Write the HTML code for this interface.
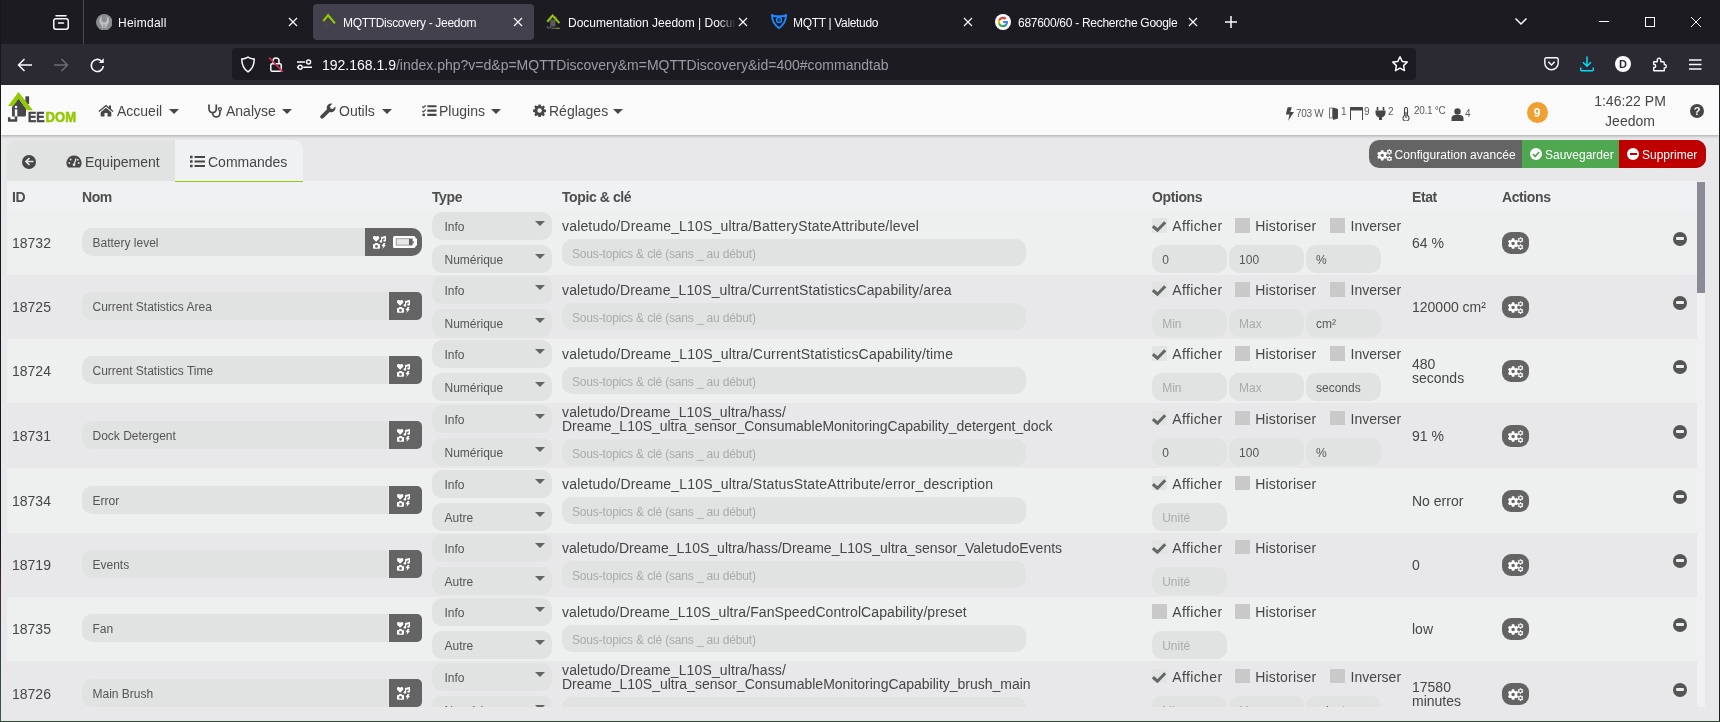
<!DOCTYPE html><html lang="fr"><head><meta charset="utf-8"><title>MQTTDiscovery - Jeedom</title><style>
*{box-sizing:border-box;margin:0;padding:0}
html,body{width:1720px;height:722px;overflow:hidden;background:#e8e8ea;font-family:"Liberation Sans",sans-serif;color:#464646}
body{position:relative}
#wrap{position:absolute;left:0;top:0;width:1720px;height:722px;will-change:transform}
.abs{position:absolute}
/* ---------- Browser chrome ---------- */
#tabbar{position:absolute;left:0;top:0;width:1720px;height:44px;background:#1c1b22}
#navbar{position:absolute;left:0;top:44px;width:1720px;height:41px;background:#2b2a33}
#tabbar .t{position:absolute;top:0;height:44px;color:#fbfbfe;font-size:12px;line-height:46.500px;white-space:nowrap}
#acttab{position:absolute;left:313px;top:4px;width:221px;height:36px;border-radius:4px;background:#42414d}
#urlbar{position:absolute;left:232px;top:48px;width:1184px;height:32px;border-radius:4px;background:#1c1b22}
#url{position:absolute;left:322px;top:44px;height:41px;line-height:42px;font-size:14px;color:#fbfbfe;white-space:nowrap}
#url span{color:#9d9ca6}
.cx{position:absolute;width:10px;height:10px}
/* ---------- Jeedom header ---------- */
#hdr{position:absolute;left:1px;top:85px;width:1718px;height:50px;background:#fafafa;box-shadow:0 1px 3px rgba(0,0,0,.28)}
.mi{position:absolute;top:0;height:50px;line-height:52px;font-size:14px;color:#464646;white-space:nowrap}
.caret{position:absolute;width:0;height:0;border-left:5px solid transparent;border-right:5px solid transparent;border-top:5px solid #464646}
.sm{position:absolute;font-size:10px;color:#5a5a5a;white-space:nowrap;letter-spacing:-.3px}
/* ---------- Page ---------- */
#tabs{position:absolute;left:7px;top:140px;width:296px;height:41.300px;border-radius:9px 9px 0 0;background:#e1e2e2;overflow:hidden}
#tabs .on{position:absolute;left:168px;top:0;width:128px;height:41.300px;background:#f0f1f2}
.tl{position:absolute;top:139px;height:42px;line-height:46px;font-size:14px;color:#464646;white-space:nowrap}
#btns{position:absolute;left:1369px;top:140px;width:337px;height:28px;border-radius:10px;overflow:hidden;background:#646464}
#btns div{position:absolute;top:0;height:28px;line-height:30.500px;color:#fff;font-size:12px;white-space:nowrap}
#thead{position:absolute;left:7px;top:181px;width:1690px;height:30.500px;background:#f0f1f2}
#thead b{position:absolute;top:0;line-height:32px;font-size:14px;font-weight:bold;color:#4e4e4e;letter-spacing:-.4px}
#tbl{position:absolute;left:7px;top:181px;width:1690px;height:526px;overflow:hidden}
#tbl>div{position:absolute;white-space:nowrap}
.rbg{left:0;width:1690px}
.id,.tp,.cl,.et{line-height:16px;font-size:14px;color:#464646}
.tp{letter-spacing:.16px}
.cl{letter-spacing:.2px}
.nm{left:75px;width:306px;height:27.500px;border-radius:10px 0 0 10px;background:#e1e2e2;font-size:12px;line-height:16px;color:#555}
.nm.short{width:282.500px}
.nm span{position:absolute;left:10.500px;top:6.600px}
.nb{left:382px;width:33px;height:27.600px;border-radius:0 5px 5px 0;background:#646464}
.nb.wide{left:358px;width:57px;border-radius:0 10px 10px 0}
.nb svg.imagic{position:absolute;left:7.900px;top:8.100px}
.nb.wide svg.imagic{left:8px}
.nb svg.batt{position:absolute;left:28.150px;top:8px}
.sel{left:425px;width:120px;height:28px;border-radius:10px;background:#e1e2e2;font-size:12px;line-height:16px;color:#555}
.sel span{position:absolute;left:12.500px;top:6.600px}
.sel i{position:absolute;left:103px;top:9px;width:0;height:0;border-left:5px solid transparent;border-right:5px solid transparent;border-top:5px solid #646464}
.sub{left:555px;width:464px;height:27.600px;border-radius:10px;background:#e1e2e2;font-size:12px;line-height:16px;color:#aaa;letter-spacing:-.16px}
.sub span{position:absolute;left:10px;top:7.700px}
.cb{width:14.600px;height:14.400px;background:#c9c9ca}
.cb.on{background:#e2e3e3}
.cb svg{position:absolute;left:0;top:0}
.op{width:74.600px;height:27.500px;border-radius:10px;background:#e1e2e2;font-size:12px;line-height:16px;color:#555}
.op.ph{color:#aaa}
.op span{position:absolute;left:10px;top:6.600px}
.ab{left:1495px;width:27px;height:22px;border-radius:9px;background:#646464}
.ab svg{position:absolute;left:0;top:0}
.rm{left:1666px;width:14px;height:14px;border-radius:7px;background:#555}
.rm b{position:absolute;left:3px;top:5.300px;width:8px;height:2.700px;background:#eee;border-radius:1px}
/* scrollbar + window borders */
#sbt{position:absolute;left:1697px;top:181px;width:8px;height:526px;background:#f0f0f2}
#sbh{position:absolute;left:1697px;top:182px;width:8px;height:111px;background:#8b8a97}
#bl{position:absolute;left:0;top:0;width:1.200px;height:722px;background:linear-gradient(180deg,#16171c 0,#16171c 540px,#4a2530 585px,#2b3e44 640px,#3a5a44 722px)}
#br{position:absolute;left:1718.600px;top:85px;width:1.400px;height:637px;background:#1d1d1f}
#bb{position:absolute;left:0;top:720.700px;width:1720px;height:1.300px;background:#334a38}

</style></head><body><div id="wrap">
<div id="tabbar">
  <!-- firefox view -->
  <svg class="abs" style="left:52px;top:13px" width="18" height="18" viewBox="0 0 18 18"><rect x="1.750" y="5.750" width="14.500" height="10.500" rx="2.200" fill="none" stroke="#fbfbfe" stroke-width="1.500"/><path d="M4 2.750h10" stroke="#fbfbfe" stroke-width="1.500" stroke-linecap="round"/><path d="M6.500 10h5" stroke="#fbfbfe" stroke-width="1.500" stroke-linecap="round"/></svg>
  <div class="abs" style="left:83px;top:0;width:1px;height:44px;background:#4a4952"></div>
  <!-- tab 1 -->
  <svg class="abs" style="left:95.800px;top:13.800px" width="16.500" height="16.500" viewBox="0 0 16.500 16.500"><circle cx="8.250" cy="8.250" r="8.250" fill="#8a8d8d"/><path d="M4.500 10C2.500 7 3.500 3.500 6 2.300 5 4.500 5.300 7 7 8.200h2.500c1.700-1.200 2-3.700 1-5.900C13 3.500 14 7 12 10c-1 1.500-1.500 2.500-1.700 4H6.200C6 12.500 5.500 11.500 4.500 10z" fill="#bec1c1"/><path d="M7.600 10.500v3.500M8.900 10.500v3.500" stroke="#8a8d8d" stroke-width=".7"/></svg>
  <div class="t" style="left:118px;letter-spacing:.24px">Heimdall</div>
  <svg class="cx" style="left:288px;top:17px" viewBox="0 0 10 10"><path d="M1 1l8 8M9 1l-8 8" stroke="#fbfbfe" stroke-width="1.200"/></svg>
  <!-- tab 2 active -->
  <div id="acttab"></div>
  <svg class="abs" style="left:321px;top:13.400px" width="16" height="16" viewBox="0 0 16 16"><path d="M2.300 8L7.100 2.200l6.900 8.200" fill="none" stroke="#93ca02" stroke-width="2.100" stroke-linejoin="miter"/><path d="M4.300 9.500h4v3h-4zM2.300 14.500h3" fill="none" stroke="#4b4a55" stroke-width=".9"/></svg>
  <div class="t" style="left:343px;letter-spacing:-.31px">MQTTDiscovery - Jeedom</div>
  <svg class="cx" style="left:513px;top:17px" viewBox="0 0 10 10"><path d="M1 1l8 8M9 1l-8 8" stroke="#fbfbfe" stroke-width="1.200"/></svg>
  <!-- tab 3 -->
  <svg class="abs" style="left:545px;top:13px" width="17" height="17" viewBox="0 0 17 17"><path d="M5.300 6.500h5.200v7H5.300z" fill="#5a5a60"/><path d="M10.300 3.500h1.300v3h-1.300z" fill="#5a5a60"/><path d="M2.300 8.800L7.600 2.500l6.800 7.600" fill="none" stroke="#93ca02" stroke-width="2.100"/><path d="M2.300 13v2h3v-2" fill="none" stroke="#66666c" stroke-width="1"/><path d="M6.500 15.300h4" stroke="#66666c" stroke-width="1.200"/><path d="M10.800 15.300h4" stroke="#7da516" stroke-width="1.200"/></svg>
  <div class="t" style="left:568px;width:170px;letter-spacing:0;overflow:hidden;-webkit-mask-image:linear-gradient(90deg,#000 150px,transparent 168px);mask-image:linear-gradient(90deg,#000 150px,transparent 168px)">Documentation Jeedom | Documentation</div>
  <svg class="cx" style="left:738px;top:17px" viewBox="0 0 10 10"><path d="M1 1l8 8M9 1l-8 8" stroke="#fbfbfe" stroke-width="1.200"/></svg>
  <!-- tab 4 -->
  <svg class="abs" style="left:771px;top:14px" width="16" height="15" viewBox="0 0 16 15"><path d="M1 .8C2.700 3 5 2.200 8 2.200S13.300 3 15 .8C15.300 7 13 10.500 8 14.200 3 10.500.7 7 1 .8z" fill="none" stroke="#1e88ff" stroke-width="1.900" stroke-linejoin="round"/><circle cx="8" cy="6" r="2.500" fill="none" stroke="#1e88ff" stroke-width="1.400"/><circle cx="8" cy="6" r=".8" fill="#1e88ff"/></svg>
  <div class="t" style="left:793px;letter-spacing:-.33px">MQTT | Valetudo</div>
  <svg class="cx" style="left:963px;top:17px" viewBox="0 0 10 10"><path d="M1 1l8 8M9 1l-8 8" stroke="#fbfbfe" stroke-width="1.200"/></svg>
  <!-- tab 5 -->
  <svg class="abs" style="left:995px;top:14px" width="16" height="16" viewBox="0 0 16 16"><circle cx="8" cy="8" r="8" fill="#fff"/><path d="M13 8.100c0-.4 0-.7-.1-1H8v2h2.800c-.1.600-.5 1.200-1 1.500v1.300h1.600c1-.9 1.600-2.200 1.600-3.800z" fill="#4285f4"/><path d="M8 13.200c1.400 0 2.600-.5 3.400-1.300l-1.600-1.300c-.5.300-1.100.5-1.800.5-1.400 0-2.500-.9-2.900-2.200H3.400v1.300c.8 1.800 2.600 3 4.600 3z" fill="#34a853"/><path d="M5.100 8.900c-.1-.3-.2-.6-.2-.9s.1-.6.200-.9V5.800H3.400C3.100 6.500 2.900 7.200 2.900 8s.2 1.500.5 2.200l1.700-1.300z" fill="#fbbc05"/><path d="M8 4.900c.8 0 1.500.3 2 .8l1.500-1.500C10.600 3.300 9.400 2.800 8 2.800c-2 0-3.800 1.200-4.600 3l1.700 1.300C5.500 5.800 6.600 4.900 8 4.900z" fill="#ea4335"/></svg>
  <div class="t" style="left:1018px;letter-spacing:-.29px">687600/60 - Recherche Google</div>
  <svg class="cx" style="left:1188px;top:17px" viewBox="0 0 10 10"><path d="M1 1l8 8M9 1l-8 8" stroke="#fbfbfe" stroke-width="1.200"/></svg>
  <!-- new tab -->
  <svg class="abs" style="left:1224px;top:15px" width="14" height="14" viewBox="0 0 14 14"><path d="M7 1v12M1 7h12" stroke="#fbfbfe" stroke-width="1.500"/></svg>
  <!-- list all tabs -->
  <svg class="abs" style="left:1514px;top:17px" width="14" height="9" viewBox="0 0 14 9"><path d="M1.500 1.500L7 7l5.500-5.500" fill="none" stroke="#fbfbfe" stroke-width="1.500"/></svg>
  <!-- window controls -->
  <div class="abs" style="left:1599px;top:21px;width:10px;height:1px;background:#fbfbfe"></div>
  <div class="abs" style="left:1645px;top:17px;width:10px;height:10px;border:1px solid #fbfbfe"></div>
  <svg class="abs" style="left:1691px;top:17px" width="10" height="10" viewBox="0 0 10 10"><path d="M0 0l10 10M10 0L0 10" stroke="#fbfbfe" stroke-width="1"/></svg>
</div>
<div id="navbar"></div>
<!-- nav buttons -->
<svg class="abs" style="left:17px;top:57px" width="16" height="16" viewBox="0 0 16 16"><path d="M15 8H2M7.500 2L1.500 8l6 6" fill="none" stroke="#fbfbfe" stroke-width="1.500"/></svg>
<svg class="abs" style="left:53px;top:57px" width="16" height="16" viewBox="0 0 16 16"><path d="M1 8h13M8.500 2l6 6-6 6" fill="none" stroke="#6d6c76" stroke-width="1.500"/></svg>
<svg class="abs" style="left:89px;top:56.500px" width="17" height="17" viewBox="0 0 16 16"><path d="M13.500 8.500A5.700 5.700 0 1 1 11.500 3.600" fill="none" stroke="#fbfbfe" stroke-width="1.500"/><path d="M9.300 5.700h4.500V1.200z" fill="#fbfbfe"/></svg>
<div id="urlbar"></div>
<!-- shield -->
<svg class="abs" style="left:240px;top:56px" width="16" height="17" viewBox="0 0 16 17"><path d="M8 1.200c2 1.300 4 1.800 6.200 1.800 0 6-1.600 10-6.200 12.800C3.400 13 1.800 9 1.800 3 4 3 6 2.500 8 1.200z" fill="none" stroke="#fbfbfe" stroke-width="1.500"/></svg>
<!-- lock with slash -->
<svg class="abs" style="left:267px;top:55px" width="18" height="19" viewBox="0 0 18 19"><rect x="3.750" y="8.750" width="10.500" height="7.500" rx="1.500" fill="none" stroke="#fbfbfe" stroke-width="1.500"/><path d="M6 8.500V6a3 3 0 0 1 6 0v2.500" fill="none" stroke="#fbfbfe" stroke-width="1.500"/><path d="M2 2.500l14 14.500" stroke="#e22850" stroke-width="1.600"/></svg>
<!-- permissions -->
<svg class="abs" style="left:296px;top:58px" width="17" height="14" viewBox="0 0 17 14"><path d="M1 4h8.200M1 9.300h1.200M7.200 9.300H16" stroke="#fbfbfe" stroke-width="1.400"/><circle cx="12.600" cy="4" r="2" fill="none" stroke="#fbfbfe" stroke-width="1.400"/><circle cx="4.200" cy="9.300" r="2" fill="none" stroke="#fbfbfe" stroke-width="1.400"/></svg>
<div id="url">192.168.1.9<span>/index.php?v=d&amp;p=MQTTDiscovery&amp;m=MQTTDiscovery&amp;id=400#commandtab</span></div>
<!-- star -->
<svg class="abs" style="left:1391px;top:55px" width="18" height="18" viewBox="0 0 18 18"><path d="M9 1.800l2.200 4.600 5 .7-3.600 3.500.9 5L9 13.200l-4.500 2.400.9-5L1.800 7.100l5-.7z" fill="none" stroke="#fbfbfe" stroke-width="1.500" stroke-linejoin="round"/></svg>
<!-- pocket -->
<svg class="abs" style="left:1543.500px;top:57px" width="15" height="14" viewBox="0 0 15 14"><path d="M2.300 .75h10.400a1.500 1.500 0 0 1 1.500 1.500V6a6.700 6.700 0 0 1-13.400 0V2.250A1.500 1.500 0 0 1 2.300 .75z" fill="none" stroke="#fbfbfe" stroke-width="1.400"/><path d="M4.300 4.800L7.500 8l3.200-3.200" fill="none" stroke="#fbfbfe" stroke-width="1.400"/></svg>
<!-- download -->
<svg class="abs" style="left:1579.500px;top:56px" width="14" height="16" viewBox="0 0 14 16"><path d="M7 .5v9.500M3 6.200l4 4 4-4" fill="none" stroke="#00ddff" stroke-width="1.500"/><path d="M.75 11.500v2a1.250 1.250 0 0 0 1.250 1.250h10a1.250 1.250 0 0 0 1.250-1.250v-2" fill="none" stroke="#00ddff" stroke-width="1.500"/></svg>
<!-- account -->
<div class="abs" style="left:1615px;top:56px;width:16px;height:16px;border-radius:8px;background:#fbfbfe;color:#2b2a33;font-size:11px;font-weight:bold;line-height:16.500px;text-align:center">D</div>
<!-- extensions -->
<svg class="abs" style="left:1651.500px;top:55.200px" width="15" height="18" viewBox="0 0 15 17"><path d="M1.750 6.250h3.500V4.500a1.750 1.750 0 1 1 3.500 0v1.750h2.500a1 1 0 0 1 1 1V9h.250a1.750 1.750 0 1 1 0 3.500h-.250v2.750H1.750V12h.5a1.500 1.500 0 1 0 0-3h-.5z" fill="none" stroke="#fbfbfe" stroke-width="1.400" stroke-linejoin="round"/></svg>
<!-- menu -->
<svg class="abs" style="left:1689px;top:58.500px" width="12.500" height="11" viewBox="0 0 12.500 11"><path d="M0 1h12.500M0 5.500h12.500M0 10h12.500" stroke="#fbfbfe" stroke-width="1.400"/></svg>

<div id="hdr">
  <!-- logo -->
  <svg class="abs" style="left:1px;top:1px" width="90" height="45" viewBox="0 0 90 45">
    <path d="M10 21L16.500 12.500l7.500 10V29a1.500 1.500 0 0 1-1.500 1.500H10z" fill="#46464b"/>
    <rect x="23.400" y="10.300" width="3.700" height="7.800" fill="#46464b"/>
    <path d="M6 20L16.500 5.900l14.400 18.400H25L16.500 12.800 11.200 20z" fill="#93ca02"/>
    <circle cx="14" cy="20.900" r="1.250" fill="#fafafa"/><rect x="12.800" y="23.400" width="2.500" height="7.200" fill="#fafafa"/>
    <path d="M7.200 31.200v3.400h6.800v-4" fill="none" stroke="#46464b" stroke-width="2.500"/>
    <text x="26" y="35.700" font-family="Liberation Sans, sans-serif" font-weight="bold" font-size="13.800" fill="#46464b" stroke="#46464b" stroke-width=".55" textLength="16.600" lengthAdjust="spacingAndGlyphs">EE</text>
    <text x="43.600" y="35.700" font-family="Liberation Sans, sans-serif" font-weight="bold" font-size="13.800" fill="#93ca02" stroke="#93ca02" stroke-width=".55" textLength="30.400" lengthAdjust="spacingAndGlyphs">DOM</text>
  </svg>
  <!-- Accueil -->
  <svg class="abs" style="left:96.700px;top:19.200px" width="16" height="13" viewBox="0 0 16 13"><path d="M8 .8L.5 7l.9 1L8 2.600l6.600 5.400.9-1L13 4.900V1.500h-2v1.800z" fill="#464646"/><path d="M8 3.800L2.700 8.200V12.500h3.800V9h3v3.500h3.800V8.200z" fill="#464646"/></svg>
  <div class="mi" style="left:116px">Accueil</div><div class="caret" style="left:168px;top:24px"></div>
  <!-- Analyse -->
  <svg class="abs" style="left:207.200px;top:19.300px" width="15" height="14" viewBox="0 0 15 14"><path d="M1 .6V5a3.650 3.650 0 0 0 7.300 0V.6M4.650 8.650v.65a3.650 3.650 0 0 0 7.300 0V6.800" fill="none" stroke="#464646" stroke-width="1.700"/><circle cx="11.950" cy="5.100" r="1.500" fill="none" stroke="#464646" stroke-width="1.300"/></svg>
  <div class="mi" style="left:225px">Analyse</div><div class="caret" style="left:281px;top:24px"></div>
  <!-- Outils -->
  <svg class="abs" style="left:319px;top:18px" width="16" height="16" viewBox="0 0 16 16"><path d="M15.300 3.600l-2.500 2.500-2.200-.7-.7-2.200L12.400.7a4.300 4.300 0 0 0-5.400 5.500L.8 12.400a1.900 1.900 0 0 0 2.700 2.700l6.200-6.200a4.300 4.300 0 0 0 5.600-5.300z" fill="#464646"/></svg>
  <div class="mi" style="left:338px">Outils</div><div class="caret" style="left:381px;top:24px"></div>
  <!-- Plugins -->
  <svg class="abs" style="left:421.300px;top:20.200px" width="14.500" height="11.500" viewBox="0 0 14.500 11.500"><path d="M5.300 1.300h9.200M5.300 5.600h9.200M5.300 9.900h9.200" stroke="#464646" stroke-width="2.100"/><path d="M.3 1.500l1.100 1.100L3.700 .300M.3 5.800l1.100 1.100 2.300-2.300" fill="none" stroke="#464646" stroke-width="1.200"/><rect x=".5" y="8.700" width="2.400" height="2.400" fill="#464646"/></svg>
  <div class="mi" style="left:438px">Plugins</div><div class="caret" style="left:490px;top:24px"></div>
  <!-- Réglages -->
  <svg class="abs" style="left:532px;top:19.200px" width="13.200" height="13.200" viewBox="0 0 16 16"><path d="M6.700.5h2.600l.4 2 1.300.6 1.700-1.200 1.800 1.800-1.200 1.700.6 1.300 2 .4v2.600l-2 .4-.6 1.300 1.200 1.700-1.800 1.800-1.700-1.200-1.300.6-.4 2H6.700l-.4-2-1.300-.6-1.700 1.200-1.800-1.800 1.200-1.700-.6-1.300-2-.4V6.700l2-.4.6-1.300-1.200-1.700 1.800-1.800 1.700 1.200 1.300-.6zM8 5.300a2.700 2.700 0 1 0 0 5.400 2.700 2.700 0 0 0 0-5.400z" fill="#464646"/></svg>
  <div class="mi" style="left:548px">Réglages</div><div class="caret" style="left:612px;top:24px"></div>

  <!-- summary -->
  <svg class="abs" style="left:1284px;top:22px" width="9.500" height="14" viewBox="0 0 9 13"><path d="M2.500 0h4L5 4.500h3.500L3 13l1.200-6H.8z" fill="#464646"/></svg>
  <div class="sm" style="left:1295px;top:22.8px">703 W</div>
  <svg class="abs" style="left:1328px;top:22px" width="10" height="13" viewBox="0 0 10 13"><path d="M.5 1h3v10h-3z" fill="none" stroke="#777" stroke-width="1"/><path d="M4 .5l5 1.500v9.500L4 13z" fill="#464646"/></svg>
  <div class="sm" style="left:1340px;top:20.8px">1</div>
  <svg class="abs" style="left:1349px;top:22px" width="13" height="13" viewBox="0 0 13 13"><path d="M.5 13V.5h12V13" fill="none" stroke="#464646" stroke-width="1"/><rect x=".5" y=".5" width="12" height="3" fill="#464646"/></svg>
  <div class="sm" style="left:1363px;top:20.8px">9</div>
  <svg class="abs" style="left:1374px;top:22px" width="11" height="13" viewBox="0 0 11 13"><path d="M2.500 0v3.500M8.500 0v3.500" stroke="#464646" stroke-width="1.600"/><path d="M.5 3.500h10v2.500a5 5 0 0 1-3.500 4.500V13h-3v-2.500A5 5 0 0 1 .5 6z" fill="#464646"/></svg>
  <div class="sm" style="left:1387px;top:20.8px">2</div>
  <svg class="abs" style="left:1401px;top:22px" width="8" height="14" viewBox="0 0 8 14"><path d="M2.500 2a1.500 1.500 0 0 1 3 0v6.500a3 3 0 1 1-3 0z" fill="none" stroke="#464646" stroke-width="1.100"/><path d="M4 5v6" stroke="#464646" stroke-width="1.200"/></svg>
  <div class="sm" style="left:1413px;top:19.8px">20.1 °C</div>
  <svg class="abs" style="left:1450px;top:23px" width="13" height="13" viewBox="0 0 13 13"><circle cx="6.500" cy="3.500" r="3.200" fill="#464646"/><path d="M.5 13v-2.500a3.500 3.500 0 0 1 3.500-3.500h5a3.500 3.500 0 0 1 3.500 3.500V13z" fill="#464646"/></svg>
  <div class="sm" style="left:1464px;top:22.8px">4</div>
  <!-- message badge -->
  <div class="abs" style="left:1525.500px;top:16.600px;width:21px;height:21px;border-radius:11px;background:#f0a030;color:#fff;font-size:12px;font-weight:bold;line-height:22.500px;text-align:center">9</div>
  <!-- clock -->
  <div class="abs" style="left:1564px;top:6px;width:130px;text-align:center;font-size:14px;line-height:20px;color:#464646">1:46:22 PM<br>Jeedom</div>
  <!-- help -->
  <div class="abs" style="left:1689px;top:19px;width:14px;height:14px;border-radius:7px;background:#464646;color:#fafafa;font-size:11px;font-weight:bold;line-height:14.500px;text-align:center">?</div>
</div>

<!-- tab strip -->
<div id="tabs"><div class="on"></div></div>
<div class="abs" style="left:22px;top:154.700px;width:14px;height:14px;border-radius:7px;background:#464646"></div>
<svg class="abs" style="left:24.500px;top:157.200px" width="9" height="9" viewBox="0 0 9 9"><path d="M8.500 4.500H1.500M4.500 1L1 4.500 4.500 8" fill="none" stroke="#e1e2e2" stroke-width="1.700"/></svg>
<svg class="abs" style="left:66px;top:155px" width="16" height="13" viewBox="0 0 16 13"><path d="M8 .5a7.500 7.500 0 0 0-6.300 11.600c.2.300.5.400.8.400h11c.3 0 .6-.1.800-.4A7.500 7.500 0 0 0 8 .5z" fill="#464646"/><path d="M8.200 9.500l1.800-6" stroke="#e1e2e2" stroke-width="1.300"/><circle cx="8" cy="9.800" r="1.400" fill="#e1e2e2"/><circle cx="3.300" cy="8" r=".9" fill="#e1e2e2"/><circle cx="4.700" cy="4.500" r=".9" fill="#e1e2e2"/><circle cx="12.700" cy="8" r=".9" fill="#e1e2e2"/><circle cx="11.800" cy="4.800" r=".9" fill="#e1e2e2"/></svg>
<div class="tl" style="left:85px">Equipement</div>
<svg class="abs" style="left:190px;top:155px" width="15" height="13" viewBox="0 0 15 13"><path d="M4.500 2H15M4.500 6.500H15M4.500 11H15" stroke="#464646" stroke-width="1.800"/><path d="M0 2h2.600M0 6.500h2.600M0 11h2.600" stroke="#464646" stroke-width="2.400"/></svg>
<div class="tl" style="left:208px">Commandes</div>

<!-- action buttons -->
<div id="btns">
  <div style="left:153px;width:97px;background:#4fa850"></div>
  <div style="left:250px;width:87px;background:#bf0000"></div>
  <div style="left:25.500px;letter-spacing:.06px">Configuration avancée</div>
  <div style="left:176px">Sauvegarder</div>
  <div style="left:273px">Supprimer</div>
</div>
<svg class="abs" style="left:1376.700px;top:148.500px" width="15.200" height="12.700" viewBox="5.700 5.100 15.700 12.900"><path fill="#fff" fill-rule="evenodd" d="M12.49 15.41L12.39 16.79L9.81 16.79L9.71 15.41L8.45 14.68L7.20 15.29L5.92 13.06L7.06 12.27L7.06 10.83L5.92 10.04L7.20 7.81L8.45 8.42L9.71 7.69L9.81 6.31L12.39 6.31L12.49 7.69L13.75 8.42L15.00 7.81L16.28 10.04L15.14 10.83L15.14 12.27L16.28 13.06L15.00 15.29L13.75 14.68zM9.35 11.55a1.75 1.75 0 1 0 3.50 0a1.75 1.75 0 1 0 -3.50 0zM19.21 9.98L19.16 10.82L17.84 10.82L17.79 9.98L17.14 9.60L16.39 9.99L15.72 8.84L16.43 8.37L16.43 7.63L15.72 7.16L16.39 6.01L17.14 6.40L17.79 6.02L17.84 5.18L19.16 5.18L19.21 6.02L19.86 6.40L20.61 6.01L21.28 7.16L20.57 7.63L20.57 8.37L21.28 8.84L20.61 9.99L19.86 9.60zM17.50 8.00a1.00 1.00 0 1 0 2.00 0a1.00 1.00 0 1 0 -2.00 0zM19.21 17.08L19.16 17.92L17.84 17.92L17.79 17.08L17.14 16.70L16.39 17.09L15.72 15.94L16.43 15.47L16.43 14.73L15.72 14.26L16.39 13.11L17.14 13.50L17.79 13.12L17.84 12.28L19.16 12.28L19.21 13.12L19.86 13.50L20.61 13.11L21.28 14.26L20.57 14.73L20.57 15.47L21.28 15.94L20.61 17.09L19.86 16.70zM17.50 15.10a1.00 1.00 0 1 0 2.00 0a1.00 1.00 0 1 0 -2.00 0z"/></svg>
<div class="abs" style="left:1530px;top:148px;width:12px;height:12px;border-radius:6px;background:#fff"></div>
<svg class="abs" style="left:1530px;top:148px" width="12" height="12" viewBox="0 0 12 12"><path d="M3 6.200l2.200 2.200L9.200 4" fill="none" stroke="#4fa850" stroke-width="1.700"/></svg>
<div class="abs" style="left:1627px;top:148px;width:12px;height:12px;border-radius:6px;background:#fff"></div>
<div class="abs" style="left:1629.500px;top:152.800px;width:7px;height:2.500px;background:#bf0000"></div>

<!-- table header -->
<div id="thead">
  <b style="left:5px">ID</b><b style="left:75px">Nom</b><b style="left:425px">Type</b><b style="left:555px">Topic &amp; clé</b><b style="left:1145px">Options</b><b style="left:1405px">Etat</b><b style="left:1495px">Actions</b>
</div>
<div class="abs" style="left:175px;top:180.500px;width:128px;height:1.500px;background:#93ca02"></div>

<div id="tbl">
<div class="rbg" style="top:30px;height:64px;background:#eeefef"></div>
<div class="rbg" style="top:94px;height:64px;background:#e8e8ea"></div>
<div class="rbg" style="top:158px;height:64px;background:#eeefef"></div>
<div class="rbg" style="top:222px;height:65px;background:#e8e8ea"></div>
<div class="rbg" style="top:287px;height:64.5px;background:#eeefef"></div>
<div class="rbg" style="top:351.5px;height:64px;background:#e8e8ea"></div>
<div class="rbg" style="top:415.5px;height:64.5px;background:#eeefef"></div>
<div class="rbg" style="top:480px;height:46px;background:#e8e8ea"></div>
<div class="id" style="left:5px;top:54.15px;">18732</div><div class="nm short" style="top:47.25px"><span>Battery level</span></div><div class="nb wide" style="top:47.25px"><svg class="imagic" viewBox="0 0 13 13" width="13" height="13"><g fill="#fff"><path d="M3.100 5.700L.400 2.900C-.4 2.100-.2.700.7.200 1.600-.3 2.600.1 3.100.9 3.600.1 4.600-.3 5.500.2c.9.500 1.100 1.900.400 2.700z"/><path d="M8 1.100L13-.1v4.700a1.350 1.150 0 1 1-1.200-1.150V2.200L9.200 2.800v2.700A1.350 1.150 0 1 1 8 4.350z"/><path d="M.8 7.900h1l.6-.9h2.200l.6.900h1c.45 0 .8.350.8.800v3.200c0 .450-.350.800-.8.800H.8c-.450 0-.8-.350-.8-.8V8.700c0-.450.350-.800.8-.800zm2.700 1.100a1.400 1.400 0 1 0 0 2.800 1.400 1.400 0 0 0 0-2.800z"/><path d="M10.600 6.900h1.900l-1 2.100h1.500l-3.600 4 .9-2.800H8.500z"/></g></svg><svg class="batt" viewBox="0 0 24.200 12.200" width="24.200" height="12.200"><path d="M1.800 0h19.200L22.600 1.200v1.300h.6a1 1 0 0 1 1 1v5.200a1 1 0 0 1-1 1h-.6V11L21 12.200H1.800A1.800 1.800 0 0 1 0 10.400V1.800A1.800 1.800 0 0 1 1.800 0z" fill="#fff"/><rect x="2.850" y="2.500" width="16.800" height="6.900" fill="#646464"/><rect x="3.450" y="3.100" width="12.500" height="5.700" fill="#e8e8e8"/><rect x="19.600" y="5" width="1.200" height="2.200" fill="#646464"/></svg></div><div class="sel" style="top:31px"><span style="top:7.400px">Info</span><i></i></div><div class="sel" style="top:64.2px"><span>Numérique</span><i></i></div><div class="tp" style="left:555px;top:37.15px;letter-spacing:0.17px">valetudo/Dreame_L10S_ultra/BatteryStateAttribute/level</div><div class="sub" style="top:57.8px"><span>Sous-topics &amp; clé (sans _ au début)</span></div><div class="cb on" style="left:1145.2px;top:37.3px"><svg viewBox="0 0 14.600 14.400" width="14.600" height="14.400"><path d="M.9 8.200L5.400 12.200l7.800-7.900" fill="none" stroke="#666" stroke-width="3"/></svg></div><div class="cl" style="left:1165.2px;top:37.15px;letter-spacing:.38px">Afficher</div><div class="cb" style="left:1228.2px;top:37.3px"></div><div class="cl" style="left:1248.2px;top:37.15px;">Historiser</div><div class="cb" style="left:1323.1px;top:37.3px"></div><div class="cl" style="left:1343.5px;top:37.15px;letter-spacing:0">Inverser</div><div class="op" style="left:1145.2px;top:64.2px"><span>0</span></div><div class="op" style="left:1222.1px;top:64.2px"><span>100</span></div><div class="op" style="left:1299px;top:64.2px"><span>%</span></div><div class="et" style="left:1405px;top:54.15px;">64 %</div><div class="ab" style="top:50.9px"><svg viewBox="0 0 27 22" width="27" height="22"><path fill="#fff" fill-rule="evenodd" d="M12.49 15.41L12.39 16.79L9.81 16.79L9.71 15.41L8.45 14.68L7.20 15.29L5.92 13.06L7.06 12.27L7.06 10.83L5.92 10.04L7.20 7.81L8.45 8.42L9.71 7.69L9.81 6.31L12.39 6.31L12.49 7.69L13.75 8.42L15.00 7.81L16.28 10.04L15.14 10.83L15.14 12.27L16.28 13.06L15.00 15.29L13.75 14.68zM9.35 11.55a1.75 1.75 0 1 0 3.50 0a1.75 1.75 0 1 0 -3.50 0zM19.21 9.98L19.16 10.82L17.84 10.82L17.79 9.98L17.14 9.60L16.39 9.99L15.72 8.84L16.43 8.37L16.43 7.63L15.72 7.16L16.39 6.01L17.14 6.40L17.79 6.02L17.84 5.18L19.16 5.18L19.21 6.02L19.86 6.40L20.61 6.01L21.28 7.16L20.57 7.63L20.57 8.37L21.28 8.84L20.61 9.99L19.86 9.60zM17.35 8.00a1.15 1.15 0 1 0 2.30 0a1.15 1.15 0 1 0 -2.30 0zM19.21 17.08L19.16 17.92L17.84 17.92L17.79 17.08L17.14 16.70L16.39 17.09L15.72 15.94L16.43 15.47L16.43 14.73L15.72 14.26L16.39 13.11L17.14 13.50L17.79 13.12L17.84 12.28L19.16 12.28L19.21 13.12L19.86 13.50L20.61 13.11L21.28 14.26L20.57 14.73L20.57 15.47L21.28 15.94L20.61 17.09L19.86 16.70zM17.35 15.10a1.15 1.15 0 1 0 2.30 0a1.15 1.15 0 1 0 -2.30 0z"/></svg></div><div class="rm" style="top:51px"><b></b></div>
<div class="id" style="left:5px;top:118.15px;">18725</div><div class="nm" style="top:111.25px"><span>Current Statistics Area</span></div><div class="nb" style="top:111.25px"><svg class="imagic" viewBox="0 0 13 13" width="13" height="13"><g fill="#fff"><path d="M3.100 5.700L.400 2.900C-.4 2.100-.2.700.7.200 1.600-.3 2.600.1 3.100.9 3.600.1 4.600-.3 5.500.2c.9.500 1.100 1.900.400 2.700z"/><path d="M8 1.100L13-.1v4.700a1.350 1.150 0 1 1-1.200-1.150V2.200L9.200 2.800v2.700A1.350 1.150 0 1 1 8 4.350z"/><path d="M.8 7.900h1l.6-.9h2.200l.6.900h1c.45 0 .8.350.8.800v3.200c0 .450-.350.800-.8.800H.8c-.450 0-.8-.350-.8-.8V8.700c0-.450.350-.800.8-.800zm2.700 1.100a1.400 1.400 0 1 0 0 2.800 1.400 1.400 0 0 0 0-2.800z"/><path d="M10.600 6.900h1.900l-1 2.100h1.500l-3.600 4 .9-2.800H8.500z"/></g></svg></div><div class="sel" style="top:95px"><span style="top:7.400px">Info</span><i></i></div><div class="sel" style="top:128.2px"><span>Numérique</span><i></i></div><div class="tp" style="left:555px;top:101.15px;letter-spacing:0.13px">valetudo/Dreame_L10S_ultra/CurrentStatisticsCapability/area</div><div class="sub" style="top:121.8px"><span>Sous-topics &amp; clé (sans _ au début)</span></div><div class="cb on" style="left:1145.2px;top:101.3px"><svg viewBox="0 0 14.600 14.400" width="14.600" height="14.400"><path d="M.9 8.200L5.400 12.200l7.800-7.900" fill="none" stroke="#666" stroke-width="3"/></svg></div><div class="cl" style="left:1165.2px;top:101.15px;letter-spacing:.38px">Afficher</div><div class="cb" style="left:1228.2px;top:101.3px"></div><div class="cl" style="left:1248.2px;top:101.15px;">Historiser</div><div class="cb" style="left:1323.1px;top:101.3px"></div><div class="cl" style="left:1343.5px;top:101.15px;letter-spacing:0">Inverser</div><div class="op ph" style="left:1145.2px;top:128.2px"><span>Min</span></div><div class="op ph" style="left:1222.1px;top:128.2px"><span>Max</span></div><div class="op" style="left:1299px;top:128.2px"><span>cm²</span></div><div class="et" style="left:1405px;top:118.15px;">120000 cm²</div><div class="ab" style="top:114.9px"><svg viewBox="0 0 27 22" width="27" height="22"><path fill="#fff" fill-rule="evenodd" d="M12.49 15.41L12.39 16.79L9.81 16.79L9.71 15.41L8.45 14.68L7.20 15.29L5.92 13.06L7.06 12.27L7.06 10.83L5.92 10.04L7.20 7.81L8.45 8.42L9.71 7.69L9.81 6.31L12.39 6.31L12.49 7.69L13.75 8.42L15.00 7.81L16.28 10.04L15.14 10.83L15.14 12.27L16.28 13.06L15.00 15.29L13.75 14.68zM9.35 11.55a1.75 1.75 0 1 0 3.50 0a1.75 1.75 0 1 0 -3.50 0zM19.21 9.98L19.16 10.82L17.84 10.82L17.79 9.98L17.14 9.60L16.39 9.99L15.72 8.84L16.43 8.37L16.43 7.63L15.72 7.16L16.39 6.01L17.14 6.40L17.79 6.02L17.84 5.18L19.16 5.18L19.21 6.02L19.86 6.40L20.61 6.01L21.28 7.16L20.57 7.63L20.57 8.37L21.28 8.84L20.61 9.99L19.86 9.60zM17.35 8.00a1.15 1.15 0 1 0 2.30 0a1.15 1.15 0 1 0 -2.30 0zM19.21 17.08L19.16 17.92L17.84 17.92L17.79 17.08L17.14 16.70L16.39 17.09L15.72 15.94L16.43 15.47L16.43 14.73L15.72 14.26L16.39 13.11L17.14 13.50L17.79 13.12L17.84 12.28L19.16 12.28L19.21 13.12L19.86 13.50L20.61 13.11L21.28 14.26L20.57 14.73L20.57 15.47L21.28 15.94L20.61 17.09L19.86 16.70zM17.35 15.10a1.15 1.15 0 1 0 2.30 0a1.15 1.15 0 1 0 -2.30 0z"/></svg></div><div class="rm" style="top:115px"><b></b></div>
<div class="id" style="left:5px;top:182.15px;">18724</div><div class="nm" style="top:175.25px"><span>Current Statistics Time</span></div><div class="nb" style="top:175.25px"><svg class="imagic" viewBox="0 0 13 13" width="13" height="13"><g fill="#fff"><path d="M3.100 5.700L.400 2.900C-.4 2.100-.2.700.7.200 1.600-.3 2.600.1 3.100.9 3.600.1 4.600-.3 5.500.2c.9.500 1.100 1.900.400 2.700z"/><path d="M8 1.100L13-.1v4.700a1.350 1.150 0 1 1-1.200-1.150V2.200L9.200 2.800v2.700A1.350 1.150 0 1 1 8 4.350z"/><path d="M.8 7.900h1l.6-.9h2.200l.6.900h1c.45 0 .8.350.8.800v3.200c0 .450-.350.800-.8.800H.8c-.450 0-.8-.350-.8-.8V8.700c0-.450.350-.800.8-.800zm2.700 1.100a1.400 1.400 0 1 0 0 2.800 1.400 1.400 0 0 0 0-2.800z"/><path d="M10.600 6.900h1.900l-1 2.100h1.500l-3.600 4 .9-2.800H8.500z"/></g></svg></div><div class="sel" style="top:159px"><span style="top:7.400px">Info</span><i></i></div><div class="sel" style="top:192.2px"><span>Numérique</span><i></i></div><div class="tp" style="left:555px;top:165.15px;letter-spacing:0.18px">valetudo/Dreame_L10S_ultra/CurrentStatisticsCapability/time</div><div class="sub" style="top:185.8px"><span>Sous-topics &amp; clé (sans _ au début)</span></div><div class="cb on" style="left:1145.2px;top:165.3px"><svg viewBox="0 0 14.600 14.400" width="14.600" height="14.400"><path d="M.9 8.200L5.400 12.200l7.800-7.900" fill="none" stroke="#666" stroke-width="3"/></svg></div><div class="cl" style="left:1165.2px;top:165.15px;letter-spacing:.38px">Afficher</div><div class="cb" style="left:1228.2px;top:165.3px"></div><div class="cl" style="left:1248.2px;top:165.15px;">Historiser</div><div class="cb" style="left:1323.1px;top:165.3px"></div><div class="cl" style="left:1343.5px;top:165.15px;letter-spacing:0">Inverser</div><div class="op ph" style="left:1145.2px;top:192.2px"><span>Min</span></div><div class="op ph" style="left:1222.1px;top:192.2px"><span>Max</span></div><div class="op" style="left:1299px;top:192.2px"><span>seconds</span></div><div class="et" style="left:1405px;top:175.15px;">480</div><div class="et" style="left:1405px;top:189.15px;">seconds</div><div class="ab" style="top:178.9px"><svg viewBox="0 0 27 22" width="27" height="22"><path fill="#fff" fill-rule="evenodd" d="M12.49 15.41L12.39 16.79L9.81 16.79L9.71 15.41L8.45 14.68L7.20 15.29L5.92 13.06L7.06 12.27L7.06 10.83L5.92 10.04L7.20 7.81L8.45 8.42L9.71 7.69L9.81 6.31L12.39 6.31L12.49 7.69L13.75 8.42L15.00 7.81L16.28 10.04L15.14 10.83L15.14 12.27L16.28 13.06L15.00 15.29L13.75 14.68zM9.35 11.55a1.75 1.75 0 1 0 3.50 0a1.75 1.75 0 1 0 -3.50 0zM19.21 9.98L19.16 10.82L17.84 10.82L17.79 9.98L17.14 9.60L16.39 9.99L15.72 8.84L16.43 8.37L16.43 7.63L15.72 7.16L16.39 6.01L17.14 6.40L17.79 6.02L17.84 5.18L19.16 5.18L19.21 6.02L19.86 6.40L20.61 6.01L21.28 7.16L20.57 7.63L20.57 8.37L21.28 8.84L20.61 9.99L19.86 9.60zM17.35 8.00a1.15 1.15 0 1 0 2.30 0a1.15 1.15 0 1 0 -2.30 0zM19.21 17.08L19.16 17.92L17.84 17.92L17.79 17.08L17.14 16.70L16.39 17.09L15.72 15.94L16.43 15.47L16.43 14.73L15.72 14.26L16.39 13.11L17.14 13.50L17.79 13.12L17.84 12.28L19.16 12.28L19.21 13.12L19.86 13.50L20.61 13.11L21.28 14.26L20.57 14.73L20.57 15.47L21.28 15.94L20.61 17.09L19.86 16.70zM17.35 15.10a1.15 1.15 0 1 0 2.30 0a1.15 1.15 0 1 0 -2.30 0z"/></svg></div><div class="rm" style="top:179px"><b></b></div>
<div class="id" style="left:5px;top:246.95px;">18731</div><div class="nm" style="top:240.05px"><span>Dock Detergent</span></div><div class="nb" style="top:240.05px"><svg class="imagic" viewBox="0 0 13 13" width="13" height="13"><g fill="#fff"><path d="M3.100 5.700L.400 2.900C-.4 2.100-.2.700.7.200 1.600-.3 2.600.1 3.100.9 3.600.1 4.600-.3 5.500.2c.9.500 1.100 1.900.400 2.700z"/><path d="M8 1.100L13-.1v4.700a1.350 1.150 0 1 1-1.200-1.150V2.200L9.200 2.800v2.700A1.350 1.150 0 1 1 8 4.350z"/><path d="M.8 7.900h1l.6-.9h2.200l.6.900h1c.45 0 .8.350.8.800v3.200c0 .450-.350.800-.8.800H.8c-.450 0-.8-.350-.8-.8V8.700c0-.450.350-.800.8-.800zm2.700 1.100a1.400 1.400 0 1 0 0 2.800 1.400 1.400 0 0 0 0-2.800z"/><path d="M10.600 6.900h1.900l-1 2.100h1.500l-3.600 4 .9-2.800H8.500z"/></g></svg></div><div class="sel" style="top:223.8px"><span style="top:7.400px">Info</span><i></i></div><div class="sel" style="top:257px"><span>Numérique</span><i></i></div><div class="tp" style="left:555px;top:222.55px;letter-spacing:0.14px">valetudo/Dreame_L10S_ultra/hass/</div><div class="tp" style="left:555px;top:236.55px;letter-spacing:-0.03px">Dreame_L10S_ultra_sensor_ConsumableMonitoringCapability_detergent_dock</div><div class="sub" style="top:257.7px"><span>Sous-topics &amp; clé (sans _ au début)</span></div><div class="cb on" style="left:1145.2px;top:230.1px"><svg viewBox="0 0 14.600 14.400" width="14.600" height="14.400"><path d="M.9 8.200L5.400 12.200l7.800-7.900" fill="none" stroke="#666" stroke-width="3"/></svg></div><div class="cl" style="left:1165.2px;top:229.95px;letter-spacing:.38px">Afficher</div><div class="cb" style="left:1228.2px;top:230.1px"></div><div class="cl" style="left:1248.2px;top:229.95px;">Historiser</div><div class="cb" style="left:1323.1px;top:230.1px"></div><div class="cl" style="left:1343.5px;top:229.95px;letter-spacing:0">Inverser</div><div class="op" style="left:1145.2px;top:257px"><span>0</span></div><div class="op" style="left:1222.1px;top:257px"><span>100</span></div><div class="op" style="left:1299px;top:257px"><span>%</span></div><div class="et" style="left:1405px;top:246.95px;">91 %</div><div class="ab" style="top:243.7px"><svg viewBox="0 0 27 22" width="27" height="22"><path fill="#fff" fill-rule="evenodd" d="M12.49 15.41L12.39 16.79L9.81 16.79L9.71 15.41L8.45 14.68L7.20 15.29L5.92 13.06L7.06 12.27L7.06 10.83L5.92 10.04L7.20 7.81L8.45 8.42L9.71 7.69L9.81 6.31L12.39 6.31L12.49 7.69L13.75 8.42L15.00 7.81L16.28 10.04L15.14 10.83L15.14 12.27L16.28 13.06L15.00 15.29L13.75 14.68zM9.35 11.55a1.75 1.75 0 1 0 3.50 0a1.75 1.75 0 1 0 -3.50 0zM19.21 9.98L19.16 10.82L17.84 10.82L17.79 9.98L17.14 9.60L16.39 9.99L15.72 8.84L16.43 8.37L16.43 7.63L15.72 7.16L16.39 6.01L17.14 6.40L17.79 6.02L17.84 5.18L19.16 5.18L19.21 6.02L19.86 6.40L20.61 6.01L21.28 7.16L20.57 7.63L20.57 8.37L21.28 8.84L20.61 9.99L19.86 9.60zM17.35 8.00a1.15 1.15 0 1 0 2.30 0a1.15 1.15 0 1 0 -2.30 0zM19.21 17.08L19.16 17.92L17.84 17.92L17.79 17.08L17.14 16.70L16.39 17.09L15.72 15.94L16.43 15.47L16.43 14.73L15.72 14.26L16.39 13.11L17.14 13.50L17.79 13.12L17.84 12.28L19.16 12.28L19.21 13.12L19.86 13.50L20.61 13.11L21.28 14.26L20.57 14.73L20.57 15.47L21.28 15.94L20.61 17.09L19.86 16.70zM17.35 15.10a1.15 1.15 0 1 0 2.30 0a1.15 1.15 0 1 0 -2.30 0z"/></svg></div><div class="rm" style="top:243.8px"><b></b></div>
<div class="id" style="left:5px;top:311.95px;">18734</div><div class="nm" style="top:305.05px"><span>Error</span></div><div class="nb" style="top:305.05px"><svg class="imagic" viewBox="0 0 13 13" width="13" height="13"><g fill="#fff"><path d="M3.100 5.700L.400 2.900C-.4 2.100-.2.700.7.200 1.600-.3 2.600.1 3.100.9 3.600.1 4.600-.3 5.500.2c.9.500 1.100 1.900.400 2.700z"/><path d="M8 1.100L13-.1v4.700a1.350 1.150 0 1 1-1.200-1.150V2.200L9.200 2.800v2.700A1.350 1.150 0 1 1 8 4.350z"/><path d="M.8 7.900h1l.6-.9h2.200l.6.900h1c.45 0 .8.350.8.800v3.200c0 .450-.350.800-.8.800H.8c-.450 0-.8-.350-.8-.8V8.700c0-.450.350-.800.8-.800zm2.700 1.100a1.400 1.400 0 1 0 0 2.800 1.400 1.400 0 0 0 0-2.800z"/><path d="M10.600 6.900h1.900l-1 2.100h1.500l-3.600 4 .9-2.800H8.500z"/></g></svg></div><div class="sel" style="top:288.8px"><span style="top:7.400px">Info</span><i></i></div><div class="sel" style="top:322px"><span>Autre</span><i></i></div><div class="tp" style="left:555px;top:294.95px;letter-spacing:0.18px">valetudo/Dreame_L10S_ultra/StatusStateAttribute/error_description</div><div class="sub" style="top:315.6px"><span>Sous-topics &amp; clé (sans _ au début)</span></div><div class="cb on" style="left:1145.2px;top:295.1px"><svg viewBox="0 0 14.600 14.400" width="14.600" height="14.400"><path d="M.9 8.200L5.400 12.200l7.800-7.900" fill="none" stroke="#666" stroke-width="3"/></svg></div><div class="cl" style="left:1165.2px;top:294.95px;letter-spacing:.38px">Afficher</div><div class="cb" style="left:1228.2px;top:295.1px"></div><div class="cl" style="left:1248.2px;top:294.95px;">Historiser</div><div class="op ph" style="left:1145.2px;top:322px"><span>Unité</span></div><div class="et" style="left:1405px;top:311.95px;">No error</div><div class="ab" style="top:308.7px"><svg viewBox="0 0 27 22" width="27" height="22"><path fill="#fff" fill-rule="evenodd" d="M12.49 15.41L12.39 16.79L9.81 16.79L9.71 15.41L8.45 14.68L7.20 15.29L5.92 13.06L7.06 12.27L7.06 10.83L5.92 10.04L7.20 7.81L8.45 8.42L9.71 7.69L9.81 6.31L12.39 6.31L12.49 7.69L13.75 8.42L15.00 7.81L16.28 10.04L15.14 10.83L15.14 12.27L16.28 13.06L15.00 15.29L13.75 14.68zM9.35 11.55a1.75 1.75 0 1 0 3.50 0a1.75 1.75 0 1 0 -3.50 0zM19.21 9.98L19.16 10.82L17.84 10.82L17.79 9.98L17.14 9.60L16.39 9.99L15.72 8.84L16.43 8.37L16.43 7.63L15.72 7.16L16.39 6.01L17.14 6.40L17.79 6.02L17.84 5.18L19.16 5.18L19.21 6.02L19.86 6.40L20.61 6.01L21.28 7.16L20.57 7.63L20.57 8.37L21.28 8.84L20.61 9.99L19.86 9.60zM17.35 8.00a1.15 1.15 0 1 0 2.30 0a1.15 1.15 0 1 0 -2.30 0zM19.21 17.08L19.16 17.92L17.84 17.92L17.79 17.08L17.14 16.70L16.39 17.09L15.72 15.94L16.43 15.47L16.43 14.73L15.72 14.26L16.39 13.11L17.14 13.50L17.79 13.12L17.84 12.28L19.16 12.28L19.21 13.12L19.86 13.50L20.61 13.11L21.28 14.26L20.57 14.73L20.57 15.47L21.28 15.94L20.61 17.09L19.86 16.70zM17.35 15.10a1.15 1.15 0 1 0 2.30 0a1.15 1.15 0 1 0 -2.30 0z"/></svg></div><div class="rm" style="top:308.8px"><b></b></div>
<div class="id" style="left:5px;top:375.95px;">18719</div><div class="nm" style="top:369.05px"><span>Events</span></div><div class="nb" style="top:369.05px"><svg class="imagic" viewBox="0 0 13 13" width="13" height="13"><g fill="#fff"><path d="M3.100 5.700L.400 2.900C-.4 2.100-.2.700.7.200 1.600-.3 2.600.1 3.100.9 3.600.1 4.600-.3 5.500.2c.9.500 1.100 1.900.400 2.700z"/><path d="M8 1.100L13-.1v4.700a1.350 1.150 0 1 1-1.200-1.150V2.200L9.200 2.800v2.700A1.350 1.150 0 1 1 8 4.350z"/><path d="M.8 7.900h1l.6-.9h2.200l.6.900h1c.45 0 .8.350.8.800v3.200c0 .450-.350.800-.8.800H.8c-.450 0-.8-.350-.8-.8V8.700c0-.450.350-.800.8-.800zm2.700 1.100a1.400 1.400 0 1 0 0 2.800 1.400 1.400 0 0 0 0-2.800z"/><path d="M10.600 6.900h1.900l-1 2.100h1.500l-3.600 4 .9-2.800H8.500z"/></g></svg></div><div class="sel" style="top:352.8px"><span style="top:7.400px">Info</span><i></i></div><div class="sel" style="top:386px"><span>Autre</span><i></i></div><div class="tp" style="left:555px;top:358.95px;letter-spacing:0.01px">valetudo/Dreame_L10S_ultra/hass/Dreame_L10S_ultra_sensor_ValetudoEvents</div><div class="sub" style="top:379.6px"><span>Sous-topics &amp; clé (sans _ au début)</span></div><div class="cb on" style="left:1145.2px;top:359.1px"><svg viewBox="0 0 14.600 14.400" width="14.600" height="14.400"><path d="M.9 8.200L5.400 12.200l7.800-7.900" fill="none" stroke="#666" stroke-width="3"/></svg></div><div class="cl" style="left:1165.2px;top:358.95px;letter-spacing:.38px">Afficher</div><div class="cb" style="left:1228.2px;top:359.1px"></div><div class="cl" style="left:1248.2px;top:358.95px;">Historiser</div><div class="op ph" style="left:1145.2px;top:386px"><span>Unité</span></div><div class="et" style="left:1405px;top:375.95px;">0</div><div class="ab" style="top:372.7px"><svg viewBox="0 0 27 22" width="27" height="22"><path fill="#fff" fill-rule="evenodd" d="M12.49 15.41L12.39 16.79L9.81 16.79L9.71 15.41L8.45 14.68L7.20 15.29L5.92 13.06L7.06 12.27L7.06 10.83L5.92 10.04L7.20 7.81L8.45 8.42L9.71 7.69L9.81 6.31L12.39 6.31L12.49 7.69L13.75 8.42L15.00 7.81L16.28 10.04L15.14 10.83L15.14 12.27L16.28 13.06L15.00 15.29L13.75 14.68zM9.35 11.55a1.75 1.75 0 1 0 3.50 0a1.75 1.75 0 1 0 -3.50 0zM19.21 9.98L19.16 10.82L17.84 10.82L17.79 9.98L17.14 9.60L16.39 9.99L15.72 8.84L16.43 8.37L16.43 7.63L15.72 7.16L16.39 6.01L17.14 6.40L17.79 6.02L17.84 5.18L19.16 5.18L19.21 6.02L19.86 6.40L20.61 6.01L21.28 7.16L20.57 7.63L20.57 8.37L21.28 8.84L20.61 9.99L19.86 9.60zM17.35 8.00a1.15 1.15 0 1 0 2.30 0a1.15 1.15 0 1 0 -2.30 0zM19.21 17.08L19.16 17.92L17.84 17.92L17.79 17.08L17.14 16.70L16.39 17.09L15.72 15.94L16.43 15.47L16.43 14.73L15.72 14.26L16.39 13.11L17.14 13.50L17.79 13.12L17.84 12.28L19.16 12.28L19.21 13.12L19.86 13.50L20.61 13.11L21.28 14.26L20.57 14.73L20.57 15.47L21.28 15.94L20.61 17.09L19.86 16.70zM17.35 15.10a1.15 1.15 0 1 0 2.30 0a1.15 1.15 0 1 0 -2.30 0z"/></svg></div><div class="rm" style="top:372.8px"><b></b></div>
<div class="id" style="left:5px;top:440.15px;">18735</div><div class="nm" style="top:433.25px"><span>Fan</span></div><div class="nb" style="top:433.25px"><svg class="imagic" viewBox="0 0 13 13" width="13" height="13"><g fill="#fff"><path d="M3.100 5.700L.400 2.900C-.4 2.100-.2.700.7.200 1.600-.3 2.600.1 3.100.9 3.600.1 4.600-.3 5.500.2c.9.500 1.100 1.900.400 2.700z"/><path d="M8 1.100L13-.1v4.700a1.350 1.150 0 1 1-1.200-1.150V2.200L9.200 2.800v2.700A1.350 1.150 0 1 1 8 4.350z"/><path d="M.8 7.900h1l.6-.9h2.200l.6.900h1c.45 0 .8.350.8.800v3.200c0 .450-.350.800-.8.800H.8c-.450 0-.8-.350-.8-.8V8.700c0-.450.350-.800.8-.800zm2.700 1.100a1.400 1.400 0 1 0 0 2.800 1.400 1.400 0 0 0 0-2.800z"/><path d="M10.600 6.900h1.900l-1 2.100h1.500l-3.600 4 .9-2.800H8.500z"/></g></svg></div><div class="sel" style="top:417px"><span style="top:7.400px">Info</span><i></i></div><div class="sel" style="top:450.2px"><span>Autre</span><i></i></div><div class="tp" style="left:555px;top:423.15px;letter-spacing:0.08px">valetudo/Dreame_L10S_ultra/FanSpeedControlCapability/preset</div><div class="sub" style="top:443.8px"><span>Sous-topics &amp; clé (sans _ au début)</span></div><div class="cb" style="left:1145.2px;top:423.3px"></div><div class="cl" style="left:1165.2px;top:423.15px;letter-spacing:.38px">Afficher</div><div class="cb" style="left:1228.2px;top:423.3px"></div><div class="cl" style="left:1248.2px;top:423.15px;">Historiser</div><div class="op ph" style="left:1145.2px;top:450.2px"><span>Unité</span></div><div class="et" style="left:1405px;top:440.15px;">low</div><div class="ab" style="top:436.9px"><svg viewBox="0 0 27 22" width="27" height="22"><path fill="#fff" fill-rule="evenodd" d="M12.49 15.41L12.39 16.79L9.81 16.79L9.71 15.41L8.45 14.68L7.20 15.29L5.92 13.06L7.06 12.27L7.06 10.83L5.92 10.04L7.20 7.81L8.45 8.42L9.71 7.69L9.81 6.31L12.39 6.31L12.49 7.69L13.75 8.42L15.00 7.81L16.28 10.04L15.14 10.83L15.14 12.27L16.28 13.06L15.00 15.29L13.75 14.68zM9.35 11.55a1.75 1.75 0 1 0 3.50 0a1.75 1.75 0 1 0 -3.50 0zM19.21 9.98L19.16 10.82L17.84 10.82L17.79 9.98L17.14 9.60L16.39 9.99L15.72 8.84L16.43 8.37L16.43 7.63L15.72 7.16L16.39 6.01L17.14 6.40L17.79 6.02L17.84 5.18L19.16 5.18L19.21 6.02L19.86 6.40L20.61 6.01L21.28 7.16L20.57 7.63L20.57 8.37L21.28 8.84L20.61 9.99L19.86 9.60zM17.35 8.00a1.15 1.15 0 1 0 2.30 0a1.15 1.15 0 1 0 -2.30 0zM19.21 17.08L19.16 17.92L17.84 17.92L17.79 17.08L17.14 16.70L16.39 17.09L15.72 15.94L16.43 15.47L16.43 14.73L15.72 14.26L16.39 13.11L17.14 13.50L17.79 13.12L17.84 12.28L19.16 12.28L19.21 13.12L19.86 13.50L20.61 13.11L21.28 14.26L20.57 14.73L20.57 15.47L21.28 15.94L20.61 17.09L19.86 16.70zM17.35 15.10a1.15 1.15 0 1 0 2.30 0a1.15 1.15 0 1 0 -2.30 0z"/></svg></div><div class="rm" style="top:437px"><b></b></div>
<div class="id" style="left:5px;top:504.95px;">18726</div><div class="nm" style="top:498.05px"><span>Main Brush</span></div><div class="nb" style="top:498.05px"><svg class="imagic" viewBox="0 0 13 13" width="13" height="13"><g fill="#fff"><path d="M3.100 5.700L.400 2.900C-.4 2.100-.2.700.7.200 1.600-.3 2.600.1 3.100.9 3.600.1 4.600-.3 5.500.2c.9.500 1.100 1.900.400 2.700z"/><path d="M8 1.100L13-.1v4.700a1.350 1.150 0 1 1-1.200-1.150V2.200L9.200 2.800v2.700A1.350 1.150 0 1 1 8 4.350z"/><path d="M.8 7.900h1l.6-.9h2.200l.6.900h1c.45 0 .8.350.8.800v3.200c0 .450-.350.800-.8.800H.8c-.450 0-.8-.350-.8-.8V8.700c0-.450.350-.800.8-.800zm2.700 1.100a1.400 1.400 0 1 0 0 2.800 1.400 1.400 0 0 0 0-2.800z"/><path d="M10.600 6.900h1.900l-1 2.100h1.500l-3.600 4 .9-2.800H8.500z"/></g></svg></div><div class="sel" style="top:481.8px"><span style="top:7.400px">Info</span><i></i></div><div class="sel" style="top:515px"><span>Numérique</span><i></i></div><div class="tp" style="left:555px;top:480.55px;letter-spacing:0.14px">valetudo/Dreame_L10S_ultra/hass/</div><div class="tp" style="left:555px;top:494.55px;letter-spacing:-0.01px">Dreame_L10S_ultra_sensor_ConsumableMonitoringCapability_brush_main</div><div class="sub" style="top:515.7px"><span>Sous-topics &amp; clé (sans _ au début)</span></div><div class="cb on" style="left:1145.2px;top:488.1px"><svg viewBox="0 0 14.600 14.400" width="14.600" height="14.400"><path d="M.9 8.200L5.400 12.200l7.800-7.900" fill="none" stroke="#666" stroke-width="3"/></svg></div><div class="cl" style="left:1165.2px;top:487.95px;letter-spacing:.38px">Afficher</div><div class="cb" style="left:1228.2px;top:488.1px"></div><div class="cl" style="left:1248.2px;top:487.95px;">Historiser</div><div class="cb" style="left:1323.1px;top:488.1px"></div><div class="cl" style="left:1343.5px;top:487.95px;letter-spacing:0">Inverser</div><div class="op ph" style="left:1145.2px;top:515px"><span>Min</span></div><div class="op ph" style="left:1222.1px;top:515px"><span>Max</span></div><div class="op" style="left:1299px;top:515px"><span>minutes</span></div><div class="et" style="left:1405px;top:497.95px;">17580</div><div class="et" style="left:1405px;top:511.95px;">minutes</div><div class="ab" style="top:501.7px"><svg viewBox="0 0 27 22" width="27" height="22"><path fill="#fff" fill-rule="evenodd" d="M12.49 15.41L12.39 16.79L9.81 16.79L9.71 15.41L8.45 14.68L7.20 15.29L5.92 13.06L7.06 12.27L7.06 10.83L5.92 10.04L7.20 7.81L8.45 8.42L9.71 7.69L9.81 6.31L12.39 6.31L12.49 7.69L13.75 8.42L15.00 7.81L16.28 10.04L15.14 10.83L15.14 12.27L16.28 13.06L15.00 15.29L13.75 14.68zM9.35 11.55a1.75 1.75 0 1 0 3.50 0a1.75 1.75 0 1 0 -3.50 0zM19.21 9.98L19.16 10.82L17.84 10.82L17.79 9.98L17.14 9.60L16.39 9.99L15.72 8.84L16.43 8.37L16.43 7.63L15.72 7.16L16.39 6.01L17.14 6.40L17.79 6.02L17.84 5.18L19.16 5.18L19.21 6.02L19.86 6.40L20.61 6.01L21.28 7.16L20.57 7.63L20.57 8.37L21.28 8.84L20.61 9.99L19.86 9.60zM17.35 8.00a1.15 1.15 0 1 0 2.30 0a1.15 1.15 0 1 0 -2.30 0zM19.21 17.08L19.16 17.92L17.84 17.92L17.79 17.08L17.14 16.70L16.39 17.09L15.72 15.94L16.43 15.47L16.43 14.73L15.72 14.26L16.39 13.11L17.14 13.50L17.79 13.12L17.84 12.28L19.16 12.28L19.21 13.12L19.86 13.50L20.61 13.11L21.28 14.26L20.57 14.73L20.57 15.47L21.28 15.94L20.61 17.09L19.86 16.70zM17.35 15.10a1.15 1.15 0 1 0 2.30 0a1.15 1.15 0 1 0 -2.30 0z"/></svg></div><div class="rm" style="top:501.8px"><b></b></div>
</div>
<div id="sbt"></div><div id="sbh"></div>
<div id="bl"></div><div id="br"></div><div id="bb"></div>

</div></body></html>
